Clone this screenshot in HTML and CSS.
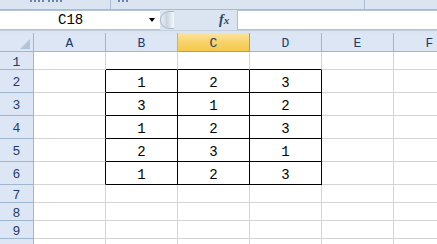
FILE: index.html
```html
<!DOCTYPE html>
<html lang="zh-CN">
<head>
  <meta charset="UTF-8" />
  <title>Sheet1</title>
  <link rel="stylesheet" href="styles.css">
</head>
<body>
  <div class="ribbon-tail">
    <div class="group g1"><span class="stub w1"></span><span class="stub w2"></span></div>
    <div class="group g2"><span class="stub w3"></span></div>
    <div class="group g3"></div>
  </div>

  <div class="formula-bar">
    <div class="name-box">
      <span class="name">C18</span>
      <span class="drop"></span>
    </div>
    <div class="grip"></div>
    <div class="fx">f<span>x</span></div>
    <div class="formula-input"></div>
  </div>
  <div class="bar-gap"></div>

  <div class="sheet">
    <!-- header row -->
    <div class="hd corner"><span class="tri"></span></div>
    <div class="hd col">A</div>
    <div class="hd col">B</div>
    <div class="hd col active">C</div>
    <div class="hd col">D</div>
    <div class="hd col">E</div>
    <div class="hd col">F</div>

    <!-- row 1 -->
    <div class="hd row">1</div>
    <div class="c"></div>
    <div class="c top"></div>
    <div class="c top"></div>
    <div class="c top"></div>
    <div class="c"></div>
    <div class="c"></div>

    <!-- row 2 -->
    <div class="hd row">2</div>
    <div class="c left"></div>
    <div class="c box">1</div>
    <div class="c box">2</div>
    <div class="c box">3</div>
    <div class="c"></div>
    <div class="c"></div>

    <!-- row 3 -->
    <div class="hd row">3</div>
    <div class="c left"></div>
    <div class="c box">3</div>
    <div class="c box">1</div>
    <div class="c box">2</div>
    <div class="c"></div>
    <div class="c"></div>

    <!-- row 4 -->
    <div class="hd row">4</div>
    <div class="c left"></div>
    <div class="c box">1</div>
    <div class="c box">2</div>
    <div class="c box">3</div>
    <div class="c"></div>
    <div class="c"></div>

    <!-- row 5 -->
    <div class="hd row">5</div>
    <div class="c left"></div>
    <div class="c box">2</div>
    <div class="c box">3</div>
    <div class="c box">1</div>
    <div class="c"></div>
    <div class="c"></div>

    <!-- row 6 -->
    <div class="hd row">6</div>
    <div class="c left"></div>
    <div class="c box">1</div>
    <div class="c box">2</div>
    <div class="c box">3</div>
    <div class="c"></div>
    <div class="c"></div>

    <!-- rows 7-10 -->
    <div class="hd row">7</div>
    <div class="c"></div><div class="c"></div><div class="c"></div><div class="c"></div><div class="c"></div><div class="c"></div>
    <div class="hd row">8</div>
    <div class="c"></div><div class="c"></div><div class="c"></div><div class="c"></div><div class="c"></div><div class="c"></div>
    <div class="hd row">9</div>
    <div class="c"></div><div class="c"></div><div class="c"></div><div class="c"></div><div class="c"></div><div class="c"></div>
    <div class="hd row"></div>
    <div class="c"></div><div class="c"></div><div class="c"></div><div class="c"></div><div class="c"></div><div class="c"></div>
  </div>
</body>
</html>
```

FILE: styles.css
```css
:root {
  --ribbon: #dbe5f1;
  --head: #dce6f4;
  --head-line: #9eb6ce;
  --grid: #d4d4d4;
  --ink: #1f3b6b;
}
* { box-sizing: border-box; }
html, body { overflow: hidden; }
body {
  margin: 0;
  width: 437px;
  height: 244px;
  background: #fff;
  font-family: "Liberation Mono", "DejaVu Sans Mono", monospace;
}

/* bottom edge of the ribbon, cut off by the screenshot */
.ribbon-tail {
  display: flex;
  height: 10px;
  background: var(--ribbon);
  border-bottom: 1px solid #a7bad3;
  overflow: hidden;
}
.group {
  display: flex;
  align-items: flex-start;
  gap: 4px;
  border-right: 1px solid #a9bdd6;
}
/* glyph feet of the cut-off group labels */
.stub {
  height: 2px;
  background: repeating-linear-gradient(90deg, #6d86a8 0 2px, transparent 2px 4px);
}
.w1 { width: 14px; }
.w2 { width: 14px; }
.w3 { width: 12px; }
.g1 { width: 111px; padding-left: 30px; }
.g2 { width: 254px; padding-left: 7px; }
.g3 { flex: 1; border-right: none; }

.formula-bar {
  display: flex;
  align-items: stretch;
  height: 20px;
  background: var(--ribbon);
}
.name-box {
  width: 160px;
  display: flex;
  align-items: center;
  background: #fff;
  border-top: 1px solid #b3c4da;
  border-bottom: 1px solid #b3c4da;
  padding: 0 5px 0 58px;
}
.name {
  flex: 1;
  font-size: 14px;
  color: #000;
}
.drop {
  width: 0;
  height: 0;
  border-left: 3.5px solid transparent;
  border-right: 3.5px solid transparent;
  border-top: 4px solid #000;
}
.grip {
  width: 14px;
  margin: 1px 0;
  border-radius: 10px 0 0 10px;
  background: linear-gradient(90deg, #eef2f7 0%, #c9d3de 45%, #f6f8fb 100%);
  border: 1px solid #a6b6ca;
  border-right: none;
}
.fx {
  width: 63px;
  padding-left: 45px;
  font: italic bold 14px "Liberation Serif", serif;
  color: #2c4467;
  line-height: 19px;
}
.fx span { font-size: 11px; }
.formula-input {
  flex: 1;
  background: #fff;
  border-left: 1px solid #a9bdd6;
  border-top: 1px solid #b3c4da;
  border-bottom: 1px solid #b3c4da;
}
.bar-gap {
  height: 3px;
  background: var(--ribbon);
  border-top: 1px solid #c3cfdc;
}

/* worksheet grid */
.sheet {
  display: grid;
  grid-template-columns: 34px repeat(6, 72px);
  grid-template-rows: 19px 18px repeat(5, 23px) repeat(4, 18px);
}
.hd {
  background: var(--head);
  color: var(--ink);
  border-right: 1px solid var(--head-line);
  border-bottom: 1px solid var(--head-line);
  display: flex;
  align-items: center;
  justify-content: center;
  font-size: 13px;
}
.corner { position: relative; }
.tri {
  position: absolute;
  right: 3px;
  bottom: 2px;
  width: 0;
  height: 0;
  border-left: 10px solid transparent;
  border-bottom: 10px solid #b3c4da;
}
.col { padding-top: 2px; }
.col.active {
  background: linear-gradient(#fbe4a0, #f8d36b 50%, #f6c94e);
  border-right-color: #c29a4a;
  border-bottom-color: #c29a4a;
}
.row { padding-top: 3px; font-size: 13px; }

.c {
  border-right: 1px solid var(--grid);
  border-bottom: 1px solid var(--grid);
  display: flex;
  align-items: center;
  justify-content: center;
  padding-top: 3px;
  font-size: 14px;
  color: #000;
}
.c.top { border-bottom-color: #000; }
.c.left { border-right-color: #000; }
.c.box {
  border-right-color: #000;
  border-bottom-color: #000;
}
```
